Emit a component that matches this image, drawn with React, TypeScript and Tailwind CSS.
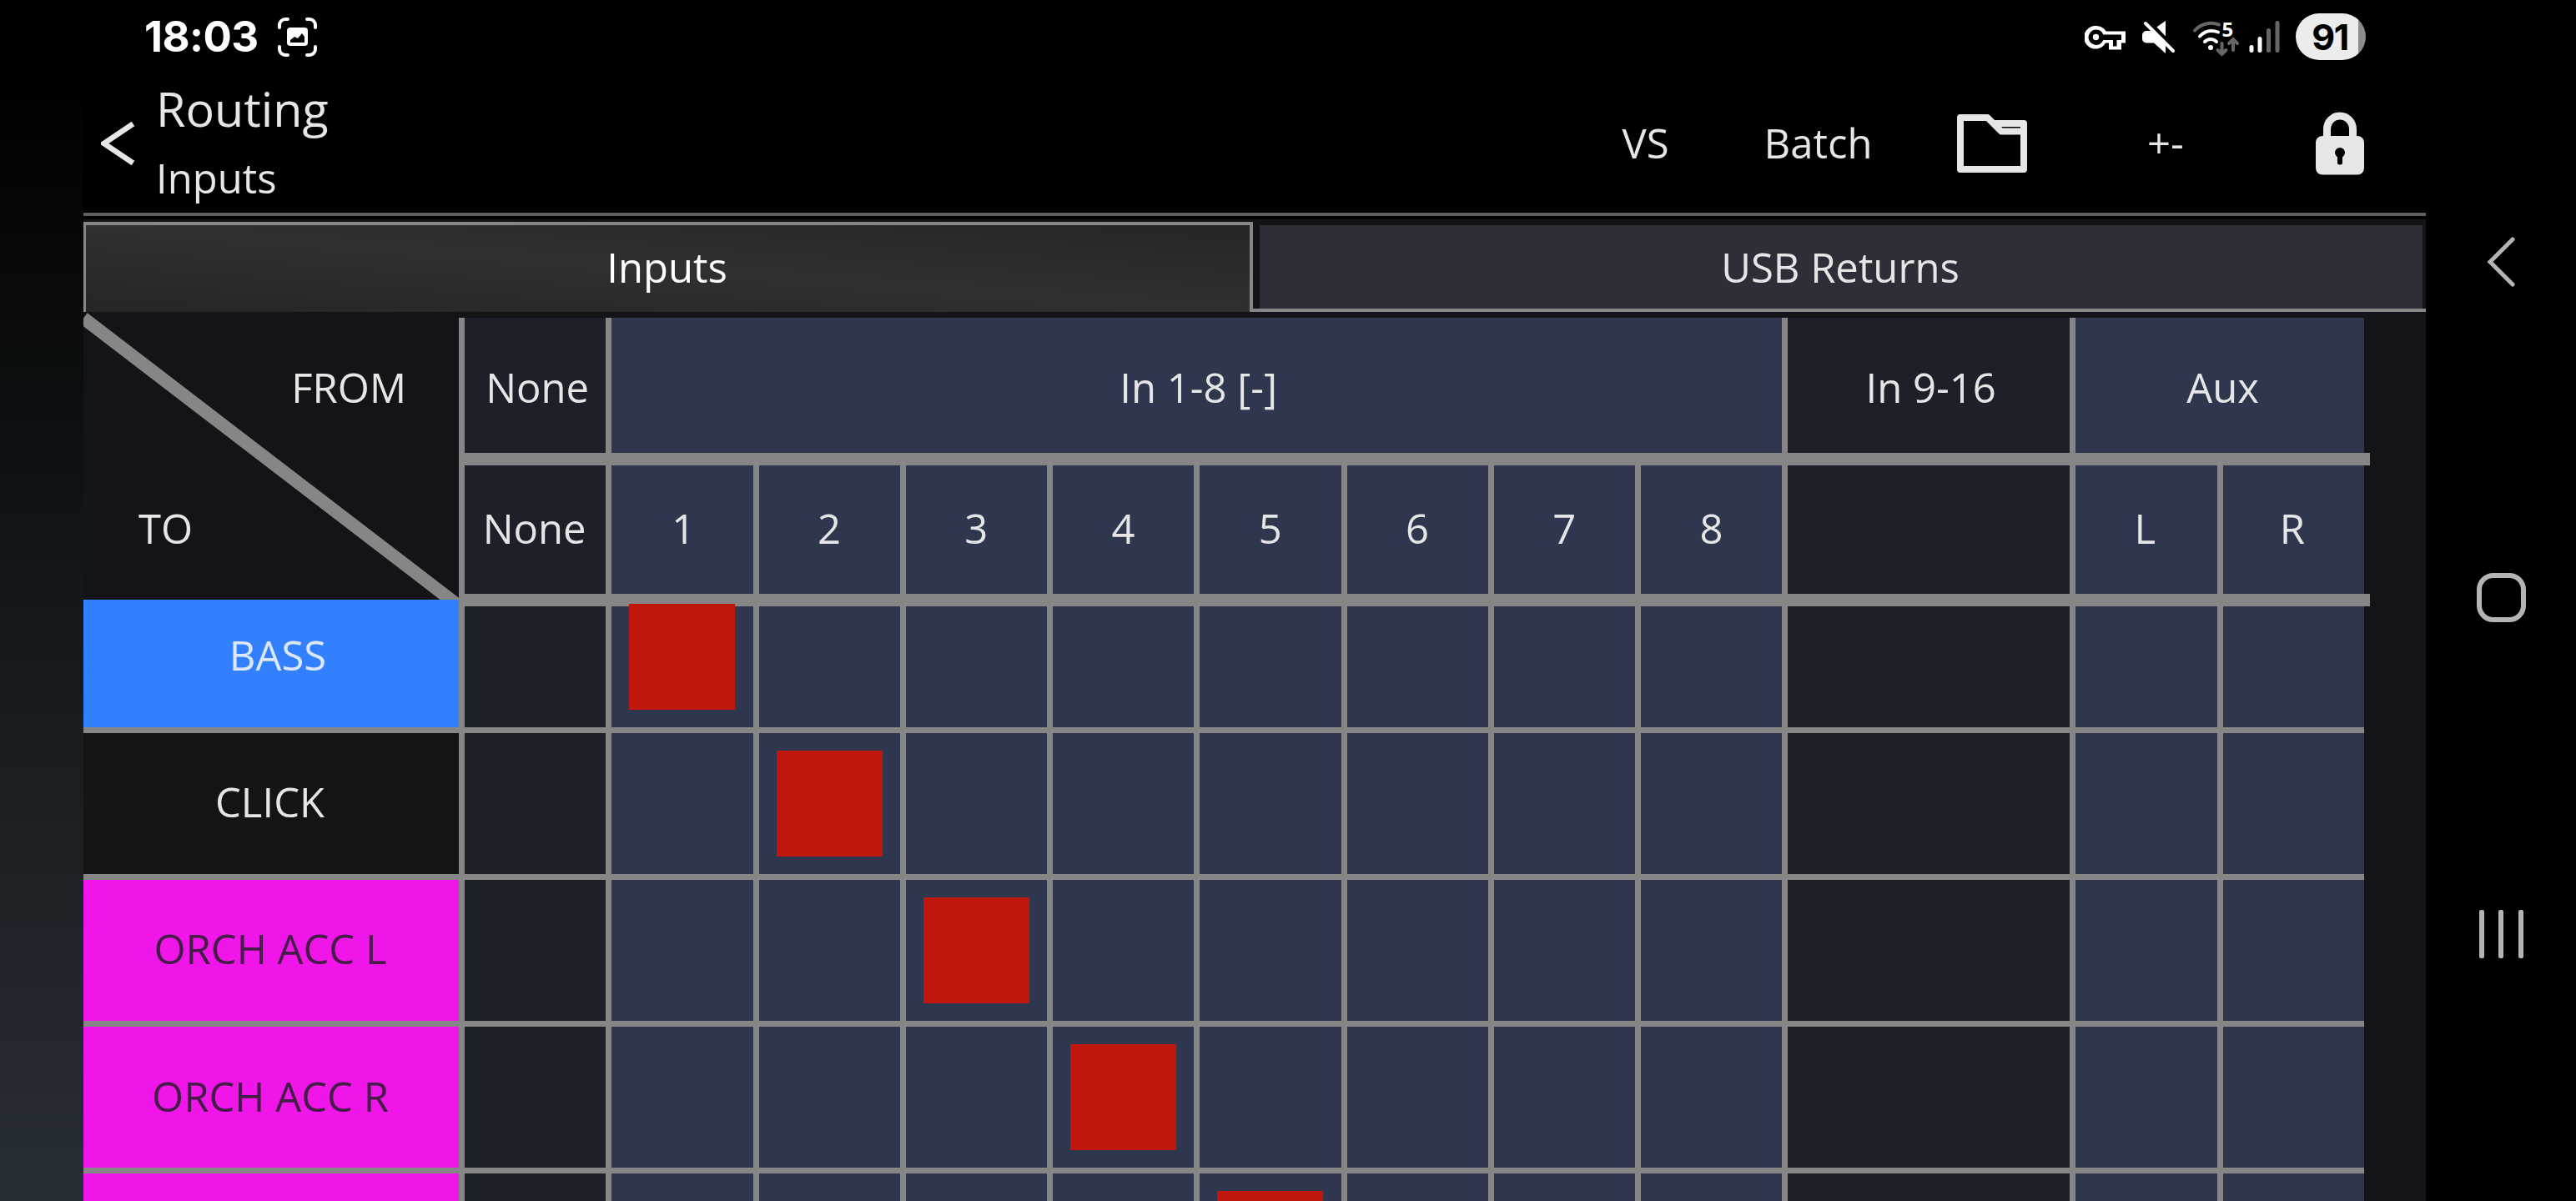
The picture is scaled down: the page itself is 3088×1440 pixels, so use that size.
import { ReactNode } from "react";
import clsx from "clsx";

const inputs = ["1", "2", "3", "4", "5", "6", "7", "8"];

const channels = [
  { name: "BASS", color: "bg-[#3380ff] text-[#dbe7fa] pl-[16px]", route: 1 },
  { name: "CLICK", color: "bg-[#141414] text-[#e6e6e6] pr-[3px]", route: 2 },
  { name: "ORCH ACC L", color: "bg-[#f015e9] text-[#431d45] pr-[2px]", route: 3 },
  { name: "ORCH ACC R", color: "bg-[#f015e9] text-[#431d45] pr-[2px]", route: 4 },
  { name: "", color: "bg-[#f015e9] text-[#431d45]", route: 5 },
];

// none, in 1-8, in 9-16, aux l, aux r
const columns = [
  "none",
  ...inputs.map((i) => `in${i}`),
  "in9-16",
  "auxL",
  "auxR",
];

const gridCols =
  "grid grid-cols-[176.25px_repeat(8,176.25px)_344.75px_176.5px_176.5px]";

function isDark(col: string) {
  return col === "none" || col === "in9-16";
}

function StatusBar() {
  return (
    <div className="flex h-[90px] shrink-0 items-start justify-between pl-[73px] pr-[72px]">
      <div className="flex">
        <span className="w-[160px] pt-[13px] font-[Inter] text-[51px] leading-[62px] font-bold tracking-[-0.6px] text-white">
          18:03
        </span>
        <svg className="mt-[21px] h-[47px] w-[47px]" viewBox="0 0 47 47">
          <path
            d="M2 12V9a7 7 0 0 1 7-7h3M35 2h3a7 7 0 0 1 7 7v3M45 35v3a7 7 0 0 1-7 7h-3M12 45H9a7 7 0 0 1-7-7v-3"
            fill="none"
            stroke="#fff"
            strokeWidth="4"
            strokeLinecap="round"
          />
          <rect x="11" y="12" width="25" height="22" rx="4" fill="#fff" />
          <path d="M15 30v-3l5-4 4 2 5-6 3 4v7z" fill="#000" />
        </svg>
      </div>
      <div className="flex">
        <svg className="mt-[31px] h-[30px] w-[49px]" viewBox="0 0 49 30">
          <path
            fillRule="evenodd"
            fill="#fff"
            d="M14 0a13.800 13.800 0 0 1 11.500 6.500H49v14h-5v8H29v-8h-4A13.800 13.800 0 1 1 14 0zM14 4.500a9.200 9.200 0 1 0 8.300 12.500H34v7.500h4.500V17H44v-6.500H22.300A9.200 9.200 0 0 0 14 4.500z"
          />
          <circle cx="13.500" cy="13.500" r="3.700" fill="#fff" />
        </svg>
        <svg className="mt-[25px] ml-[20px] h-[40px] w-[39px]" viewBox="0 0 39 40">
          <path d="M28 0v19L16.500 8z" fill="#fff" />
          <path
            d="M5 12h7l16 15v12L14 26.500H5a5 5 0 0 1-5-5V17a5 5 0 0 1 5-5z"
            fill="#fff"
          />
          <path
            d="M6 4l30.500 32"
            stroke="#000"
            strokeWidth="4"
            transform="translate(2.500 -3)"
          />
          <path
            d="M4 3l33 33"
            stroke="#fff"
            strokeWidth="4"
            strokeLinecap="round"
          />
        </svg>
        <svg
          className="mt-[16px] ml-[21px] h-[51px] w-[56px] overflow-visible"
          viewBox="0 -8 56 51"
        >
          <g fill="none" strokeLinecap="round" strokeWidth="4">
            <path d="M3 12.500C11 4 22 2 32 5.500" stroke="#666" />
            <path d="M9 19.500c6-6.500 14-8 22-5" stroke="#fff" />
            <path d="M15 26c4-4 10-4 14 0" stroke="#fff" />
            <path
              d="M35.500 28v12M30.500 36l5 5 5-5M49 36V24M44 28l5-5 5 5"
              stroke="#666"
            />
          </g>
          <circle cx="22" cy="33" r="3" fill="#fff" />
          <text
            x="35.500"
            y="19.500"
            fill="#fff"
            className="font-[Open_Sans] text-[24px] font-bold"
          >
            5
          </text>
        </svg>
        <svg className="mt-[25px] ml-[12px] h-[38px] w-[37px]" viewBox="0 0 37 38">
          <rect x="0.500" y="29" width="5" height="9" rx="2.500" fill="#fff" />
          <rect x="10.500" y="19" width="5" height="19" rx="2.500" fill="#fff" />
          <rect x="21" y="9" width="5" height="29" rx="2.500" fill="#666" />
          <rect x="31.500" y="0" width="5" height="38" rx="2.500" fill="#666" />
        </svg>
        <div className="mt-[16px] ml-[19px] flex h-[56px] w-[84px] justify-center rounded-[28px] bg-[linear-gradient(90deg,#ececec_75px,#8c8c8c_75px)]">
          <span className="pr-[2px] font-[Inter] text-[43px] leading-[56px] font-bold tracking-[-1.5px] text-black">
            91
          </span>
        </div>
      </div>
    </div>
  );
}

function HeaderButton({ children }: { children: ReactNode }) {
  return (
    <button className="flex h-[166px] w-[208px] items-center justify-center pb-[4px]">
      {children}
    </button>
  );
}

function Header() {
  return (
    <header className="flex h-[165px] shrink-0 justify-between text-[#e6e6e6]">
      <div className="flex">
        <svg className="mt-[55px] ml-[21px] h-[54px] w-[42px]" viewBox="0 0 42 54">
          <path
            d="M38.500 3.500L3.500 27l35 23.500"
            fill="none"
            stroke="#e6e6e6"
            strokeWidth="6.500"
          />
        </svg>
        <div className="ml-[24px] flex flex-col">
          <h1 className="text-[57.500px] leading-[80px]">Routing</h1>
          <h2 className="leading-[86px]">Inputs</h2>
        </div>
      </div>
      <div className="flex">
        <HeaderButton>
          <span className="pl-[1px]">VS</span>
        </HeaderButton>
        <HeaderButton>
          <span className="pr-[1px]">Batch</span>
        </HeaderButton>
        <HeaderButton>
          <svg className="mt-[2px] h-[70px] w-[84px]" viewBox="0 0 84 70">
            <path
              d="M4 4h32.500L53 20.500H80V66H4zM42 11h38v10"
              fill="none"
              stroke="#e6e6e6"
              strokeWidth="8"
              strokeLinejoin="round"
            />
          </svg>
        </HeaderButton>
        <HeaderButton>+-</HeaderButton>
        <HeaderButton>
          <svg className="mt-[2px] ml-[2px] h-[76px] w-[58px]" viewBox="0 0 58 76">
            <path
              d="M13.500 32V21a15.500 16 0 0 1 31 0v11"
              fill="none"
              stroke="#e6e6e6"
              strokeWidth="9"
            />
            <rect y="29" width="58" height="46.500" rx="8" fill="#e6e6e6" />
            <circle cx="29" cy="49" r="6" fill="#000" />
            <rect x="26" y="49" width="6" height="14.500" rx="2.500" fill="#000" />
          </svg>
        </HeaderButton>
      </div>
    </header>
  );
}

function Tabs() {
  return (
    <div className="flex h-[108px] shrink-0">
      <button className="flex w-[1402px] items-center justify-center border-4 border-b-0 border-l-3 border-[#868686] bg-[linear-gradient(to_top_right,#252525,#303030_50%,#252525)] pr-[2px] pb-[3px] text-white">
        Inputs
      </button>
      <div className="flex grow border-b-4 border-[#868686] pt-1 pr-1 pl-2">
        <button className="flex grow items-center justify-center bg-[#2f2e38] pr-[2px] text-[#e6e6e6]">
          USB Returns
        </button>
      </div>
    </div>
  );
}

function Cell({
  dark,
  className,
  children,
}: {
  dark?: boolean;
  className?: string;
  children?: ReactNode;
}) {
  return (
    <div
      className={clsx(
        "flex justify-center border-l-7 border-[#868686]",
        dark ? "bg-[#1e2029]" : "bg-[#2f374f]",
        className,
      )}
    >
      {children}
    </div>
  );
}

function RoutingGrid() {
  return (
    <div className="flex grow pt-[7px] text-[#e6e6e6]">
      <div className="w-[450px] shrink-0">
        <div className="relative h-[338px]">
          <svg
            className="absolute -top-[7px] left-0 h-[345px] w-[450px]"
            viewBox="0 0 450 345"
          >
            <path d="M0 7.500L452 354" stroke="#868686" strokeWidth="15.500" />
          </svg>
          <div className="relative flex h-[169px] items-center justify-end pr-[63px] pb-[2px]">
            FROM
          </div>
          <div className="relative flex h-[169px] items-center pb-[2px] pl-[66px]">
            TO
          </div>
        </div>
        {channels.map((channel, i) => (
          <div
            key={i}
            className={clsx(
              "flex items-center justify-center border-b-7 border-[#868686]",
              i === 0 ? "h-[159.500px] pb-[19px]" : "h-[176.25px] pb-[3px]",
              channel.color,
            )}
          >
            {channel.name}
          </div>
        ))}
      </div>

      <div className="w-[2291px]">
        <div className="grid h-[162px] grid-cols-[176.25px_1410px_344.75px_353px]">
          <Cell dark className="items-center pt-1 pl-[5px]">None</Cell>
          <Cell className="items-center pt-1 pl-[4px]">In 1-8 [-]</Cell>
          <Cell dark className="items-center pt-1 pl-[5px]">In 9-16</Cell>
          <Cell className="items-center pt-1 pl-[7px]">Aux</Cell>
        </div>
        <div className="h-[15px] bg-[#868686]" />
        <div className={clsx("h-[153.500px]", gridCols)}>
          {["None", ...inputs, "", "L", "R"].map((label, i) => (
            <Cell
              key={i}
              dark={isDark(columns[i])}
              className={clsx(
                "items-center pb-[3px]",
                label === "None" && "pr-[2px]",
                label === "1" && "pl-[3px]",
                (label === "L" || label === "R") && "pr-[3px]",
              )}
            >
              {label}
            </Cell>
          ))}
        </div>
        <div className="h-[15px] bg-[#868686]" />
        {channels.map((channel, row) => (
          <div
            key={row}
            className={clsx(
              gridCols,
              row === 0 ? "h-[152px]" : "h-[176.25px]",
            )}
          >
            {columns.map((col) => (
              <Cell
                key={col}
                dark={isDark(col)}
                className="items-start border-b-7"
              >
                {col === `in${channel.route}` && (
                  <div
                    className={clsx(
                      "h-[127px] w-[127px] bg-[#c1160b]",
                      row === 0 ? "-mt-[3px]" : "mt-[21px]",
                    )}
                  />
                )}
              </Cell>
            ))}
          </div>
        ))}
      </div>
    </div>
  );
}

function NavBar() {
  return (
    <nav className="flex w-[180px] shrink-0 flex-col items-center bg-black">
      <svg className="mt-[284px] h-[60px] w-[34px]" viewBox="0 0 34 60">
        <path
          d="M31 3L4 30l27 27"
          fill="none"
          stroke="#b4b4b4"
          strokeWidth="5"
          strokeLinecap="round"
        />
      </svg>
      <div className="mt-[343px] h-[59px] w-[59px] rounded-[20px] border-6 border-[#b4b4b4]" />
      <div className="mt-[345px] flex h-[58px] w-[53px] justify-between">
        <div className="w-[6px] rounded-xs bg-[#b4b4b4]" />
        <div className="w-[6px] rounded-xs bg-[#b4b4b4]" />
        <div className="w-[6px] rounded-xs bg-[#b4b4b4]" />
      </div>
    </nav>
  );
}

function App() {
  return (
    <div className="flex h-[1440px] w-[3088px] overflow-hidden bg-black font-['Open_Sans',sans-serif] text-[49px] leading-none">
      <div className="mt-[90px] w-[100px] shrink-0 bg-[linear-gradient(180deg,#000000,#14181b_47%,#282e35)]" />
      <div className="flex h-[1440px] w-[2808px] shrink-0 flex-col overflow-hidden">
        <StatusBar />
        <Header />
        <div className="h-[4px] shrink-0 bg-[#606060]" />
        <div className="h-[4px] shrink-0 bg-black" />
        <div className="flex grow flex-col bg-[#131418] pt-[3px]">
          <Tabs />
          <RoutingGrid />
        </div>
      </div>
      <NavBar />
    </div>
  );
}

export default App;
